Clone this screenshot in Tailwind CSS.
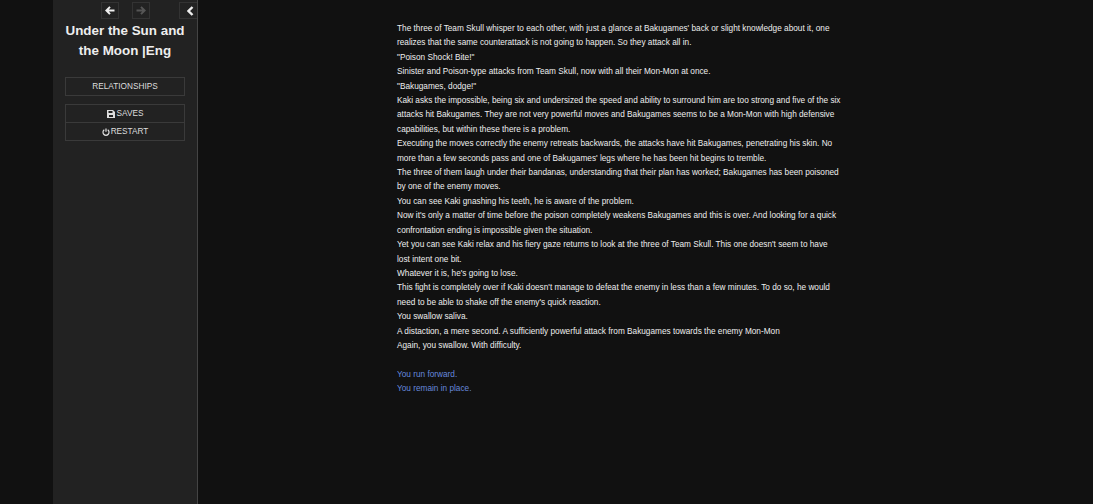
<!DOCTYPE html>
<html lang="en">
<head>
  <meta charset="UTF-8">
  <title>Under the Sun and the Moon</title>
  <script src="https://cdn.jsdelivr.net/npm/@tailwindcss/browser@4"></script>
</head>
<body class="bg-[#111] font-['Liberation_Sans',Arial,sans-serif] text-[#eee] h-[504px] overflow-hidden">
  <div class="flex h-[504px] pl-[53px]">
    <!-- Sidebar -->
    <aside class="w-[145px] h-full shrink-0 bg-[#222] border-r border-[#444] relative">
      <div class="flex h-[19px] pt-[2px] relative">
        <div class="flex gap-[13px] ml-[48px]">
          <span class="w-[18px] h-[17px] border border-[#333] flex items-center justify-center">
            <svg width="10" height="9" viewBox="0 0 11 10" fill="none" stroke="#eee" stroke-width="2.2"><path d="M10.5 5H2M5.5 1 1.5 5l4 4"/></svg>
          </span>
          <span class="w-[18px] h-[17px] border border-[#333] flex items-center justify-center">
            <svg width="10" height="9" viewBox="0 0 11 10" fill="none" stroke="#555" stroke-width="2.2"><path d="M.5 5H9M5.5 1l4 4-4 4"/></svg>
          </span>
        </div>
        <span class="absolute right-0 top-[2px] w-[18px] h-[17px] border border-r-0 border-[#333] flex items-center justify-center pl-[4px]">
          <svg width="7" height="10" viewBox="0 0 7 10" fill="none" stroke="#eee" stroke-width="2.4"><path d="M5.5 1 1.5 5l4 4"/></svg>
        </span>
      </div>
      <h1 class="mt-[2px] text-center font-bold text-[13.4px] leading-[20px] text-[#eee]">Under the Sun and<br>the Moon |Eng</h1>
      <div class="mx-[12px] mt-[16px] text-[8.25px] text-[#ddd] text-center">
        <div class="h-[19px] border border-[#3a3a3a] flex items-center justify-center"><span class="pt-[2px]">RELATIONSHIPS</span></div>
        <div class="mt-[8px] h-[19px] border border-[#3a3a3a] flex items-center justify-center gap-[2px]">
          <svg width="8" height="8" viewBox="0 0 8 8" fill="#ddd"><path d="M0 0h6l2 2v6H0zM1.5 1v2h4V1zM2 5v2h4V5z"/></svg>
          <span class="pt-[2px]">SAVES</span>
        </div>
        <div class="-mt-px h-[19px] border border-[#3a3a3a] flex items-center justify-center gap-[1px]">
          <svg width="8" height="8" viewBox="0 0 9 9" fill="none" stroke="#ddd" stroke-width="1.4"><path d="M2.6 2a3.4 3.4 0 1 0 3.8 0M4.5 .5v3.6"/></svg>
          <span class="pt-[2px]">RESTART</span>
        </div>
      </div>
    </aside>
    <!-- Passage -->
    <main class="ml-[199px] w-[445px] pt-[22px] text-[8.25px] leading-[14.4px] text-[#eee]">
      <p>The three of Team Skull whisper to each other, with just a glance at Bakugames' back or slight knowledge about it, one realizes that the same counterattack is not going to happen. So they attack all in.</p>
      <p>"Poison Shock! Bite!"</p>
      <p>Sinister and Poison-type attacks from Team Skull, now with all their Mon-Mon at once.</p>
      <p>"Bakugames, dodge!"</p>
      <p>Kaki asks the impossible, being six and undersized the speed and ability to surround him are too strong and five of the six attacks hit Bakugames. They are not very powerful moves and Bakugames seems to be a Mon-Mon with high defensive capabilities, but within these there is a problem.</p>
      <p>Executing the moves correctly the enemy retreats backwards, the attacks have hit Bakugames, penetrating his skin. No more than a few seconds pass and one of Bakugames' legs where he has been hit begins to tremble.</p>
      <p>The three of them laugh under their bandanas, understanding that their plan has worked; Bakugames has been poisoned by one of the enemy moves.</p>
      <p>You can see Kaki gnashing his teeth, he is aware of the problem.</p>
      <p>Now it's only a matter of time before the poison completely weakens Bakugames and this is over. And looking for a quick confrontation ending is impossible given the situation.</p>
      <p>Yet you can see Kaki relax and his fiery gaze returns to look at the three of Team Skull. This one doesn't seem to have lost intent one bit.</p>
      <p>Whatever it is, he's going to lose.</p>
      <p>This fight is completely over if Kaki doesn't manage to defeat the enemy in less than a few minutes. To do so, he would need to be able to shake off the enemy's quick reaction.</p>
      <p>You swallow saliva.</p>
      <p>A distaction, a mere second. A sufficiently powerful attack from Bakugames towards the enemy Mon-Mon</p>
      <p>Again, you swallow. With difficulty.</p>
      <p class="mt-[14.4px] text-[#68d]"><a href="#">You run forward.</a></p>
      <p class="text-[#68d]"><a href="#">You remain in place.</a></p>
    </main>
  </div>
</body>
</html>
